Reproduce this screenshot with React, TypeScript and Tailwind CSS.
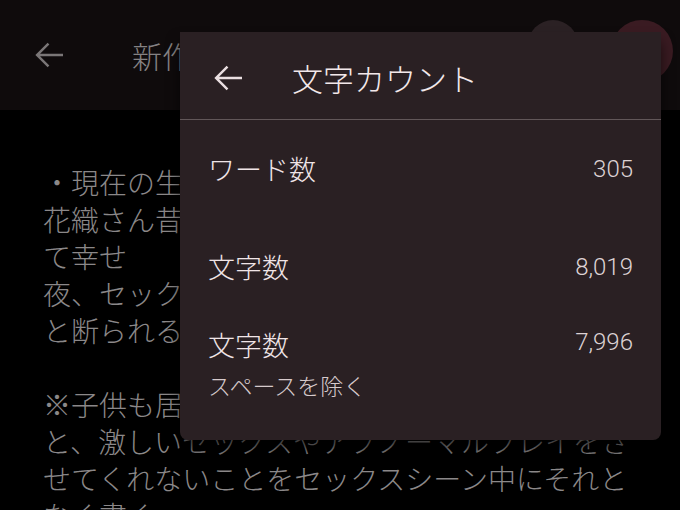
import React from 'react';

// material "arrow_back" glyph
function BackArrow({ className }: { className?: string }) {
  return (
    <svg viewBox="0 0 24 24" className={className} fill="currentColor">
      <path d="M20 11.25H6.9l5.3-5.3-1-1L4.2 12l7 7.05 1-1-5.3-5.3H20z" />
    </svg>
  );
}

const noteLines = [
  '・現在の生活について',
  '花織さん昔から優しく',
  'て幸せ',
  '夜、セックスに誘って',
  'と断られる',
  '',
  '※子供も居るし',
  'と、激しいセックスやアブノーマルプレイをさ',
  'せてくれないことをセックスシーン中にそれと',
  'なく書く',
];

const stats = [
  { label: 'ワード数', value: '305' },
  { label: '文字数', value: '8,019' },
];

export default function App() {
  return (
    <div className="relative w-[680px] h-[510px] overflow-hidden bg-black font-['Noto_Sans_CJK_JP',sans-serif]">
      {/* editor top bar */}
      <header className="h-[110px] bg-[#0f0b0c] flex items-center pl-[28px] pr-[7px]">
        <BackArrow className="w-[42px] h-[42px] text-[#7a7677]" />
        <h1 className="ml-[62px] text-[30px] font-light text-[#858283] whitespace-nowrap">新作メモ</h1>
        <div className="ml-auto self-start pt-[20px] flex items-start gap-[33px]">
          <span className="w-[50px] h-[50px] rounded-full bg-[#2b2124]" />
          <span className="w-[62px] h-[62px] rounded-full bg-[#3a1b22]" />
        </div>
      </header>

      {/* note body */}
      <main className="pt-[54px] pl-[43px] text-[28px] leading-[37px] font-light text-[#8b8889]">
        {noteLines.map((line, i) => (
          <p key={i} className="whitespace-nowrap h-[37px]">
            {line}
          </p>
        ))}
      </main>

      {/* word count dialog */}
      <div className="absolute left-[180px] top-[32px] w-[481px] h-[408px] rounded-b-[8px] bg-[#2a2023] font-light shadow-[0_10px_14px_rgba(0,0,0,0.6)]">
        <div className="h-[88px] pt-[5px] border-b border-[#625759] flex items-center pl-[27px]">
          <BackArrow className="w-[42px] h-[42px] text-[#eadfe1]" />
          <h2 className="ml-[43px] text-[31px] text-[#f2e8ea]">文字カウント</h2>
        </div>

        {stats.map((s) => (
          <div key={s.label} className="h-[98px] px-[28px] flex items-center justify-between">
            <span className="text-[27px] text-[#f0e5e7]">{s.label}</span>
            <span className="font-['Roboto',sans-serif] text-[24px] text-[#ddd2d4]">{s.value}</span>
          </div>
        ))}

        <div className="pt-[11px] px-[28px] flex items-start justify-between">
          <div>
            <p className="text-[27px] leading-[36px] text-[#f0e5e7]">文字数</p>
            <p className="mt-[7px] text-[23px] leading-[30px] text-[#d6cacc]">スペースを除く</p>
          </div>
          <span className="font-['Roboto',sans-serif] text-[24px] leading-[30px] text-[#ddd2d4]">7,996</span>
        </div>
      </div>
    </div>
  );
}
